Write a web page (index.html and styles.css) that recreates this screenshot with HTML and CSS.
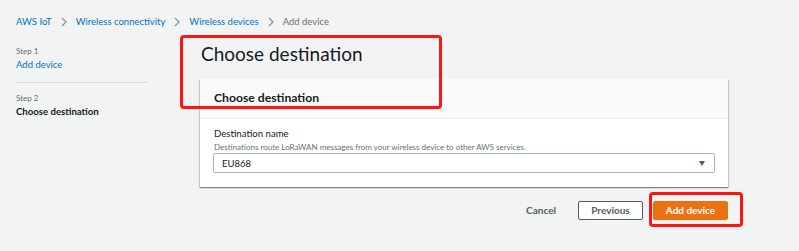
FILE: index.html
```html
<!DOCTYPE html>
<html lang="en">
<head>
<meta charset="utf-8">
<title>Add device</title>
<link rel="stylesheet" href="styles.css">
</head>
<body>
<nav class="breadcrumbs">
  <a class="crumb" href="#">AWS IoT</a>
  <svg class="chev" width="6" height="10" viewBox="0 0 6 10"><polyline points="1,1 5,5 1,9" fill="none" stroke="#879596" stroke-width="1.2"/></svg>
  <a class="crumb" href="#">Wireless connectivity</a>
  <svg class="chev" width="6" height="10" viewBox="0 0 6 10"><polyline points="1,1 5,5 1,9" fill="none" stroke="#879596" stroke-width="1.2"/></svg>
  <a class="crumb" href="#">Wireless devices</a>
  <svg class="chev" width="6" height="10" viewBox="0 0 6 10"><polyline points="1,1 5,5 1,9" fill="none" stroke="#879596" stroke-width="1.2"/></svg>
  <span class="crumb current">Add device</span>
</nav>
<div class="layout">
  <aside class="steps">
    <div class="step">
      <div class="step-num">Step 1</div>
      <a class="step-link" href="#">Add device</a>
    </div>
    <div class="step step-last">
      <div class="step-num">Step 2</div>
      <div class="step-current">Choose destination</div>
    </div>
  </aside>
  <main class="main">
    <h1 class="title">Choose destination</h1>
    <section class="card">
      <div class="card-head">Choose destination</div>
      <div class="card-body">
        <div class="label">Destination name</div>
        <div class="desc">Destinations route LoRaWAN messages from your wireless device to other AWS services.</div>
        <div class="select">
          <span>EU868</span>
          <span class="caret"></span>
        </div>
      </div>
    </section>
    <div class="actions">
      <button class="btn btn-link">Cancel</button>
      <button class="btn btn-normal">Previous</button>
      <button class="btn btn-primary">Add device</button>
    </div>
    <div class="mark mark-title"></div>
    <div class="mark mark-button"></div>
  </main>
</div>
</body>
</html>
```
FILE: styles.css
```css
* { box-sizing: border-box; }
html, body { margin: 0; padding: 0; }
body {
  background: #f2f3f3;
  font-family: Lato, "Noto Sans", sans-serif;
  color: #16191f;
  width: 799px;
  height: 251px;
  overflow: hidden;
}
.breadcrumbs {
  display: flex;
  align-items: center;
  gap: 9px;
  padding: 14px 16px 0;
  height: 29px;
  font-size: 9.5px;
}
.crumb { color: #0073bb; text-decoration: none; line-height: 15px; }
.crumb.current { color: #687078; }
.chev { display: block; }

.layout { display: flex; padding-left: 16px; }
.steps { width: 131px; margin-right: 53px; padding-top: 16px; }
.step { padding-bottom: 10px; border-bottom: 1px solid #d5dbdb; }
.step-last { border-bottom: none; padding-top: 9px; }
.step-num { font-size: 8px; color: #687078; line-height: 13px; }
.step-link { display: block; color: #0073bb; text-decoration: none; font-size: 9.5px; line-height: 14px; }
.step-current { font-size: 9.6px; font-weight: 700; line-height: 14px; }

.main { position: relative; width: 528px; }
.title {
  margin: 0;
  padding: 13px 0 0 1px;
  height: 50px;
  font-size: 19px;
  font-weight: 400;
  line-height: 24px;
  color: #16191f;
}
.card {
  background: #fff;
  box-shadow: 0 1px 1px 0 rgba(0,28,36,.3), 1px 1px 1px 0 rgba(0,28,36,.15), -1px 1px 1px 0 rgba(0,28,36,.15);
}
.card-head {
  background: #fafafa;
  border-bottom: 1px solid #eaeded;
  height: 40px;
  padding: 11px 14px 0;
  font-size: 12.2px;
  font-weight: 700;
  line-height: 16px;
}
.card-body { padding: 8px 13px 14px; }
.label { font-size: 9.6px; line-height: 14px; padding-left: 1px; }
.desc { font-size: 8px; line-height: 12px; color: #687078; padding-left: 1px; }
.select {
  height: 20px;
  border: 1px solid #aab7b8;
  border-radius: 2px;
  display: flex;
  align-items: center;
  justify-content: space-between;
  padding: 0 9px 0 8px;
  font-size: 9.5px;
}
.caret {
  width: 0; height: 0;
  border-left: 3.5px solid transparent;
  border-right: 3.5px solid transparent;
  border-top: 5px solid #545b64;
}
.actions {
  display: flex;
  justify-content: flex-end;
  align-items: center;
  margin-top: 14px;
}
.btn {
  font-family: inherit;
  font-size: 10px;
  font-weight: 700;
  height: 19px;
  line-height: 17px;
  padding: 0 14px;
  border-radius: 2px;
  white-space: nowrap;
  text-align: center;
  cursor: pointer;
}
.btn-link { background: none; border: 1px solid transparent; color: #545b64; margin-right: 7px; }
.btn-normal { background: #fff; border: 1px solid #545b64; color: #545b64; width: 65px; padding: 0; margin-right: 10px; }
.btn-primary { background: #ec7211; border: 1px solid #ec7211; color: #fff; width: 75px; padding: 0; }

.mark { position: absolute; border: 3px solid #ff1414; border-radius: 4px; pointer-events: none; }
.mark-title { left: -20px; top: 6px; width: 262px; height: 74px; }
.mark-button { left: 449px; top: 163px; width: 94px; height: 35px; }
```
